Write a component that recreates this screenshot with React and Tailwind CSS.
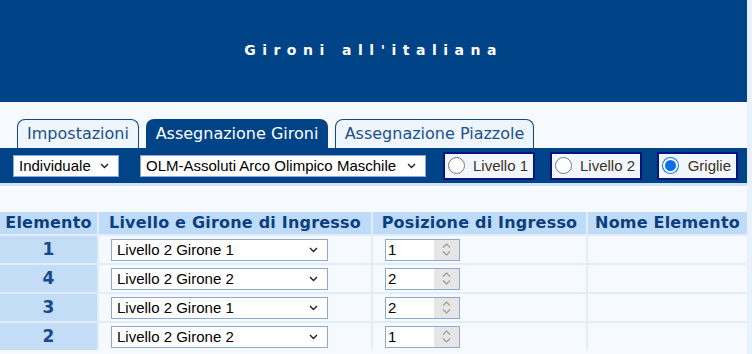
import React from 'react';

const sans = { fontFamily: '"Liberation Sans", Arial, sans-serif' };

const Chevron = ({ className = '' }) => (
    <svg width="9" height="6" viewBox="0 0 9 6" className={className}>
        <path d="M1 1 L4.5 4.5 L8 1" fill="none" stroke="#222" strokeWidth="1.4" />
    </svg>
);

const Select = ({ value, className = '' }) => (
    <div
        className={`flex items-center justify-between bg-white border border-[#8aa9d3] h-[22px] pl-[5px] pr-[9px] text-[15px] text-black ${className}`}
        style={sans}
    >
        <span className="whitespace-nowrap leading-none">{value}</span>
        <Chevron />
    </div>
);

const Radio = ({ label, checked, className = '' }) => (
    <div
        className={`flex items-center h-[28px] bg-[#f2f7fd] border-2 border-[#0a1480] pl-[3px] pr-[5px] text-[15px] text-[#3b3122] ${className}`}
        style={sans}
    >
        {checked ? (
            <span className="w-[17px] h-[17px] rounded-full bg-[#0b6fe8] flex items-center justify-center">
                <span className="w-[11px] h-[11px] rounded-full bg-[#0b6fe8] border-2 border-white box-content" />
            </span>
        ) : (
            <span className="w-[17px] h-[17px] rounded-full bg-white border border-[#777]" />
        )}
        <span className="ml-auto leading-none">{label}</span>
    </div>
);

const NumberInput = ({ value }) => (
    <div className="ml-[12px] flex h-[22px] w-[75px] bg-white border border-[#8aa9d3]" style={sans}>
        <span className="flex-1 pl-[2px] text-[15px] leading-[20px] text-black">{value}</span>
        <span className="w-[25px] bg-[#e6e6e6] flex flex-col items-center justify-center gap-[3px]">
            <svg width="9" height="5" viewBox="0 0 9 5">
                <path d="M1 4.5 L4.5 1 L8 4.5" fill="none" stroke="#9a9a9a" strokeWidth="1.1" />
            </svg>
            <svg width="9" height="5" viewBox="0 0 9 5">
                <path d="M1 0.5 L4.5 4 L8 0.5" fill="none" stroke="#9a9a9a" strokeWidth="1.1" />
            </svg>
        </span>
    </div>
);

const rows = [
    { el: '1', girone: 'Livello 2 Girone 1', pos: '1' },
    { el: '4', girone: 'Livello 2 Girone 2', pos: '2' },
    { el: '3', girone: 'Livello 2 Girone 1', pos: '2' },
    { el: '2', girone: 'Livello 2 Girone 2', pos: '1' },
];

const head = { fontFamily: '"DejaVu Sans", Verdana, sans-serif' };

export default function App() {
    return (
        <div className="w-[752px] h-[354px] overflow-hidden bg-[#e9f2fc]">
            <div className="w-[747px] h-full bg-[#f6faff]">
                {/* Header */}
                <div className="h-[102px] bg-[#004487] flex items-center justify-center">
                    <span
                        className="text-white font-bold text-[14px] tracking-[6.5px] pb-[2px]"
                        style={head}
                    >
                        Gironi all'italiana
                    </span>
                </div>

                {/* Tabs */}
                <div className="flex items-end gap-[7px] pl-[17px] pt-[17px]" style={head}>
                    <div className="h-[29px] w-[122px] rounded-t-[8px] border border-b-0 border-[#0b4a8e] bg-[#eef5fd] text-[#1d4f8c] text-[16px] flex items-center justify-center">
                        Impostazioni
                    </div>
                    <div className="h-[29px] w-[182px] rounded-t-[8px] bg-[#004487] text-white text-[16px] flex items-center justify-center">
                        Assegnazione Gironi
                    </div>
                    <div className="h-[29px] w-[199px] rounded-t-[8px] border border-b-0 border-[#0b4a8e] bg-[#eef5fd] text-[#1d4f8c] text-[16px] flex items-center justify-center">
                        Assegnazione Piazzole
                    </div>
                </div>

                {/* Toolbar */}
                <div className="h-[35px] bg-[#004487] flex items-center pl-[13px]">
                    <Select value="Individuale" className="w-[106px]" />
                    <Select value="OLM-Assoluti Arco Olimpico Maschile" className="w-[286px] ml-[21px]" />
                    <Radio label="Livello 1" className="w-[92px] ml-[17px]" />
                    <Radio label="Livello 2" className="w-[92px] ml-[15px]" />
                    <Radio label="Griglie" checked className="w-[81px] ml-[15px]" />
                </div>

                <div className="h-[3px] bg-[#cfe2f6]" />
                <div className="h-[26px]" />

                {/* Table */}
                <div
                    className="grid grid-cols-[97px_272px_213px_159px] gap-[2px] bg-[#e1edfa]"
                    style={head}
                >
                    {['Elemento', 'Livello e Girone di Ingresso', 'Posizione di Ingresso', 'Nome Elemento'].map((h) => (
                        <div
                            key={h}
                            className="h-[22px] bg-[#bedbf9] text-[#0d3f7c] font-bold text-[16px] tracking-[0.2px] flex items-center justify-center whitespace-nowrap"
                        >
                            {h}
                        </div>
                    ))}
                    {rows.map((r, i) => (
                        <React.Fragment key={i}>
                            <div className="h-[27px] bg-[#c3ddf7] text-[#18498c] font-bold text-[17px] flex items-center justify-center">
                                {r.el}
                            </div>
                            <div className="h-[27px] bg-[#f6faff] flex items-center">
                                <Select value={r.girone} className="w-[217px] ml-[12px]" />
                            </div>
                            <div className="h-[27px] bg-[#f6faff] flex items-center">
                                <NumberInput value={r.pos} />
                            </div>
                            <div className="h-[27px] bg-[#f6faff]" />
                        </React.Fragment>
                    ))}
                </div>
            </div>
        </div>
    );
}
